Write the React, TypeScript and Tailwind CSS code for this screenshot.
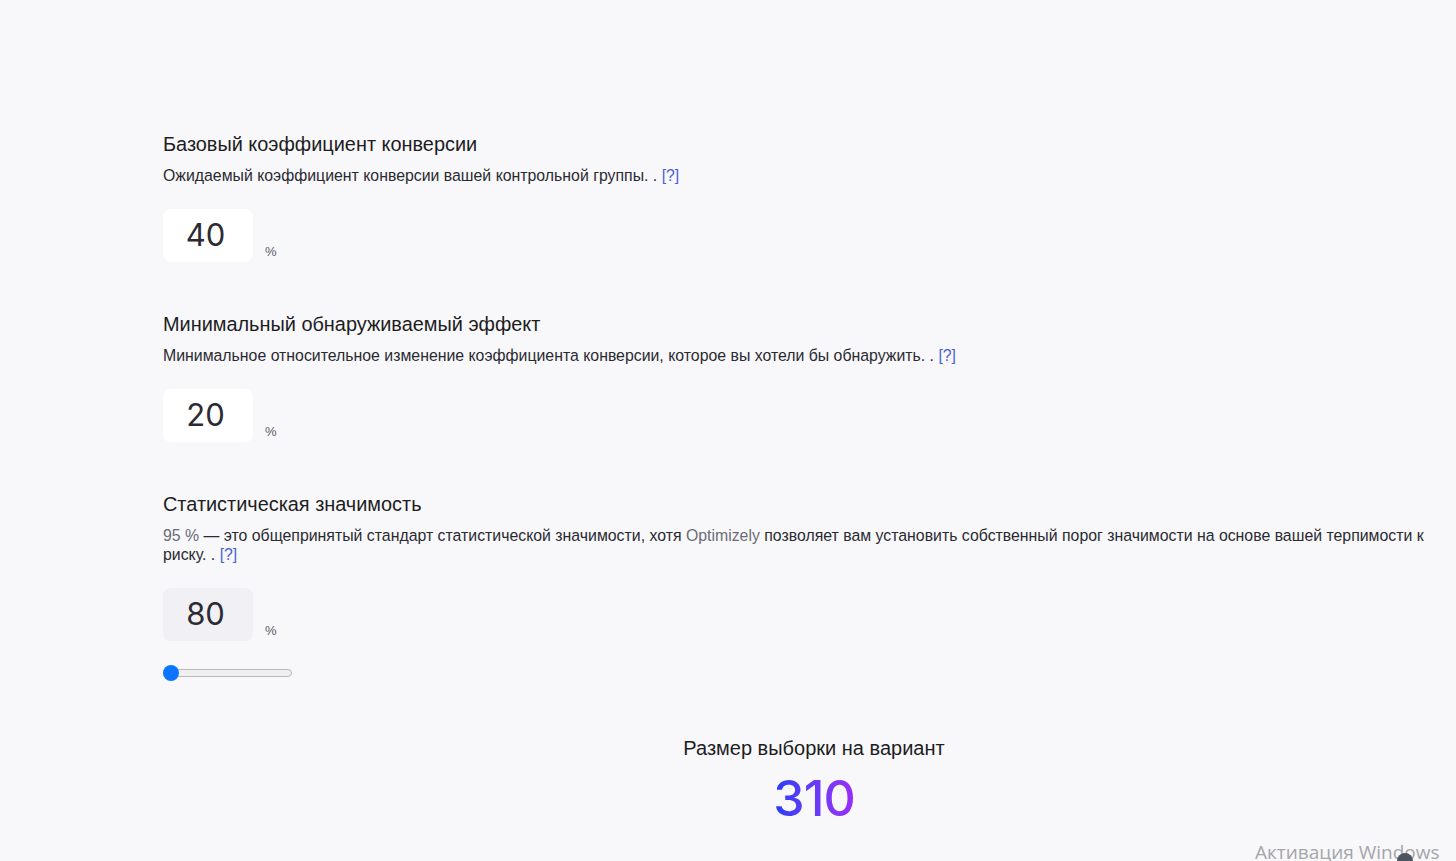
import React, { useState } from "react";

const sections = [
  {
    title: "Базовый коэффициент конверсии",
    desc: (
      <>Ожидаемый коэффициент конверсии вашей контрольной группы. . </>
    ),
    value: "40",
    disabled: false,
  },
  {
    title: "Минимальный обнаруживаемый эффект",
    desc: (
      <>
        Минимальное относительное изменение коэффициента конверсии, которое вы
        хотели бы обнаружить. .{" "}
      </>
    ),
    value: "20",
    disabled: false,
  },
  {
    title: "Статистическая значимость",
    desc: (
      <>
        <span className="text-[#6b6b75]">95 %</span> — это общепринятый
        стандарт статистической значимости, хотя{" "}
        <span className="text-[#6b6b75]">Optimizely</span> позволяет вам
        установить собственный порог значимости на основе вашей терпимости к
        риску. .{" "}
      </>
    ),
    value: "80",
    disabled: true,
  },
];

const Field = ({ item, slider }: any) => (
  <div className="flex flex-col">
    <h2 className="text-[19.9px] leading-6 text-[#1d1d22]">{item.title}</h2>
    <p className="mt-[10px] text-[15.85px] leading-[19px] text-[#2a2a30]">
      {item.desc}
      <a className="text-[#4a5fd6]">[?]</a>
    </p>
    <div className="mt-[24px] flex items-end">
      <div
        className={`${
          item.disabled ? "bg-[#f1f1f5]" : "bg-white"
        } w-[90px] h-[53px] rounded-lg flex items-center justify-center pr-[5px] font-['Inter',sans-serif] text-[31px] text-[#2b2b33]`}
      >
        {item.value}
      </div>
      <span className="ml-[12px] mb-[1px] text-[13px] text-[#5c5c66]">%</span>
    </div>
    {slider}
  </div>
);

export default function App() {
  const [val] = useState(80);
  return (
    <div className="relative min-h-[861px] w-full overflow-hidden bg-[#f8f8fb] font-['Liberation_Sans',Arial,sans-serif]">
      <div className="flex flex-col gap-[50px] pl-[163px] pr-[14px] pt-[132px]">
        <Field item={sections[0]} />
        <Field item={sections[1]} />
        <Field
          item={sections[2]}
          slider={
            <div className="mt-[24px] relative w-[129px] h-[16px] flex items-center">
              <div className="w-full h-[8px] rounded-full bg-[#efefef] border border-[#b9b9b9]" />
              <div className="absolute left-0 w-[16px] h-[16px] rounded-full bg-[#0b75ff]" />
            </div>
          }
        />
      </div>
      <div className="pl-[172px] mt-[55px] flex flex-col items-center">
        <div className="text-[20px] leading-6 text-[#1d1d22]">
          Размер выборки на вариант
        </div>
        <div className="mt-[13px] font-['Inter',sans-serif] text-[50px] leading-[50px] font-medium tracking-[-1px] bg-gradient-to-r from-[#1f3cf6] to-[#9a2cf7] bg-clip-text text-transparent">
          {val === 80 ? 310 : 310}
        </div>
      </div>
      <div className="absolute left-[1255px] top-[838px] font-['Open_Sans',sans-serif] text-[19px] text-[#a5a5aa]">
        Активация Windows
      </div>
      <div className="absolute left-[1397px] top-[853px] w-[16px] h-[16px] rounded-full bg-[#4b5560]" />
    </div>
  );
}
